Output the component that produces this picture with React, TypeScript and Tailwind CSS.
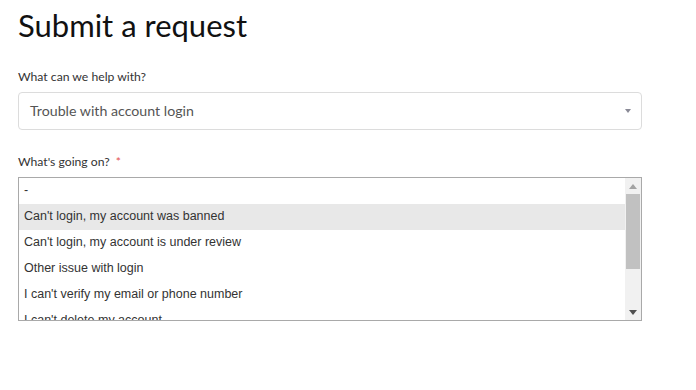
const options = [
  "-",
  "Can't login, my account was banned",
  "Can't login, my account is under review",
  "Other issue with login",
  "I can't verify my email or phone number",
  "I can't delete my account",
];

function Scrollbar() {
  return (
    <div className="flex w-[16px] shrink-0 flex-col bg-[#f1f1f1]">
      <div className="flex h-[16px] items-center justify-center">
        <svg width="8" height="5" viewBox="0 0 8 5">
          <path d="M0 5 L4 0 L8 5 Z" fill="#a3a3a3" />
        </svg>
      </div>
      <div className="mx-[1px] h-[75px] bg-[#c1c1c1]" />
      <div className="flex-1" />
      <div className="flex h-[16px] items-center justify-center">
        <svg width="8" height="5" viewBox="0 0 8 5">
          <path d="M0 0 L4 5 L8 0 Z" fill="#505050" />
        </svg>
      </div>
    </div>
  );
}

export default function App() {
  return (
    <main className="min-h-[390px] bg-white px-[18px] pt-[7px] font-['Lato',sans-serif]">
      <div className="flex w-[624px] flex-col">
        <h1 className="text-[31px] leading-[36px] font-normal text-[#111]">Submit a request</h1>

        {/* request type */}
        <label className="mt-[26px] text-[12.2px] leading-[16px] text-[#333]">What can we help with?</label>
        <div className="mt-[7px] flex h-[38px] items-center justify-between rounded-[4px] border border-[#dcdcdc] pl-[11px] pr-[10px]">
          <span className="text-[14.2px] text-[#555]">Trouble with account login</span>
          <svg width="6" height="4" viewBox="0 0 6 4">
            <path d="M0 0 L6 0 L3 4 Z" fill="#8a8a96" />
          </svg>
        </div>

        {/* reason listbox */}
        <label className="mt-[24px] text-[12.2px] leading-[16px] text-[#333]">
          What's going on? <span className="ml-[3px] text-[#e45050]">*</span>
        </label>
        <div className="mt-[7px] flex h-[144px] overflow-hidden border border-[#a9a9a9]">
          <ul className="flex-1 font-['Liberation_Sans',Arial,sans-serif] text-[12.5px] text-[#333]">
            {options.map((o, i) => (
              <li
                key={o}
                className={
                  i === 1
                    ? "flex h-[26px] items-center bg-[#e8e8e8] px-[5px] pb-[1px]"
                    : "flex h-[26px] items-center px-[5px] pb-[1px]"
                }
              >
                {o}
              </li>
            ))}
          </ul>
          <Scrollbar />
        </div>
      </div>
    </main>
  );
}
